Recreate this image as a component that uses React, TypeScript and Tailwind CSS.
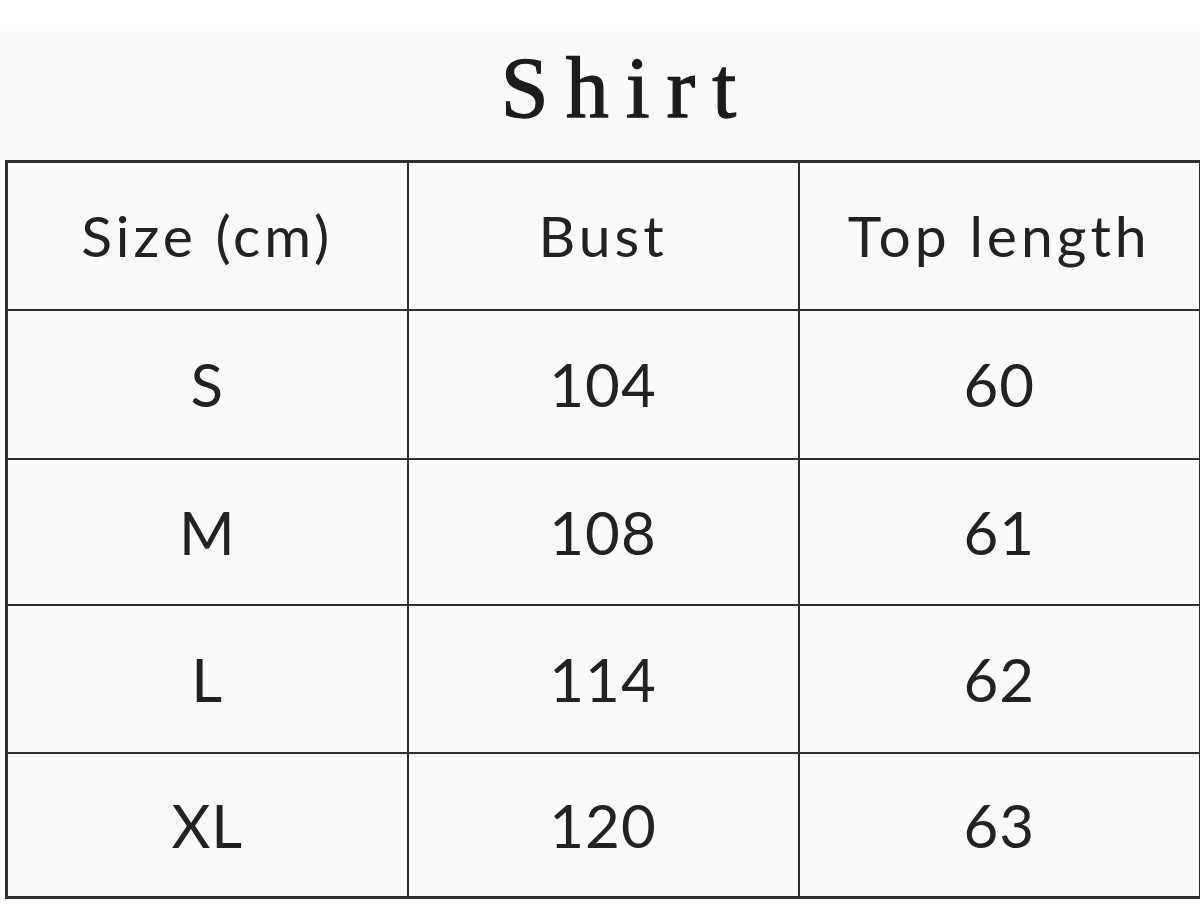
const rows = [
  { size: "S", bust: "104", length: "60", h: "h-[149px]" },
  { size: "M", bust: "108", length: "61", h: "h-[146px]" },
  { size: "L", bust: "114", length: "62", h: "h-[148px]" },
  { size: "XL", bust: "120", length: "63", h: "h-[145px]" },
];

const cell = "border-2 border-[#2e2e2e]";

export default function App() {
  return (
    <div className="h-[912px] w-[1200px] bg-white pt-[31px]">
      <div className="bg-[#fafafa] pb-px">
        <div className="flex h-[129px] items-start justify-center pt-[14px]">
          <h1
            className="pl-[54px] text-[86px] font-normal leading-none tracking-[17px] text-[#1c1c1c] [-webkit-text-stroke:1.3px_#1c1c1c]"
            style={{ fontFamily: '"Liberation Serif", "DejaVu Serif", serif' }}
          >
            Shirt
          </h1>
        </div>
        <table
          className="ml-[5px] w-[1194px] table-fixed border-collapse border-[3px] border-[#2e2e2e] text-center text-[60px] font-normal leading-none tracking-[1px] text-[#222]"
          style={{ fontFamily: 'Lato, "Open Sans", sans-serif' }}
        >
          <colgroup>
            <col className="w-[401px]" />
            <col className="w-[391px]" />
            <col className="w-[402px]" />
          </colgroup>
          <thead>
            <tr className="h-[148px] text-[57px] tracking-[4px]">
              <th className={`${cell} font-normal`}>Size (cm)</th>
              <th className={`${cell} font-normal`}>Bust</th>
              <th className={`${cell} font-normal`}>Top length</th>
            </tr>
          </thead>
          <tbody>
            {rows.map((row) => (
              <tr key={row.size} className={row.h}>
                <td className={cell}>{row.size}</td>
                <td className={cell}>{row.bust}</td>
                <td className={cell}>{row.length}</td>
              </tr>
            ))}
          </tbody>
        </table>
      </div>
    </div>
  );
}
